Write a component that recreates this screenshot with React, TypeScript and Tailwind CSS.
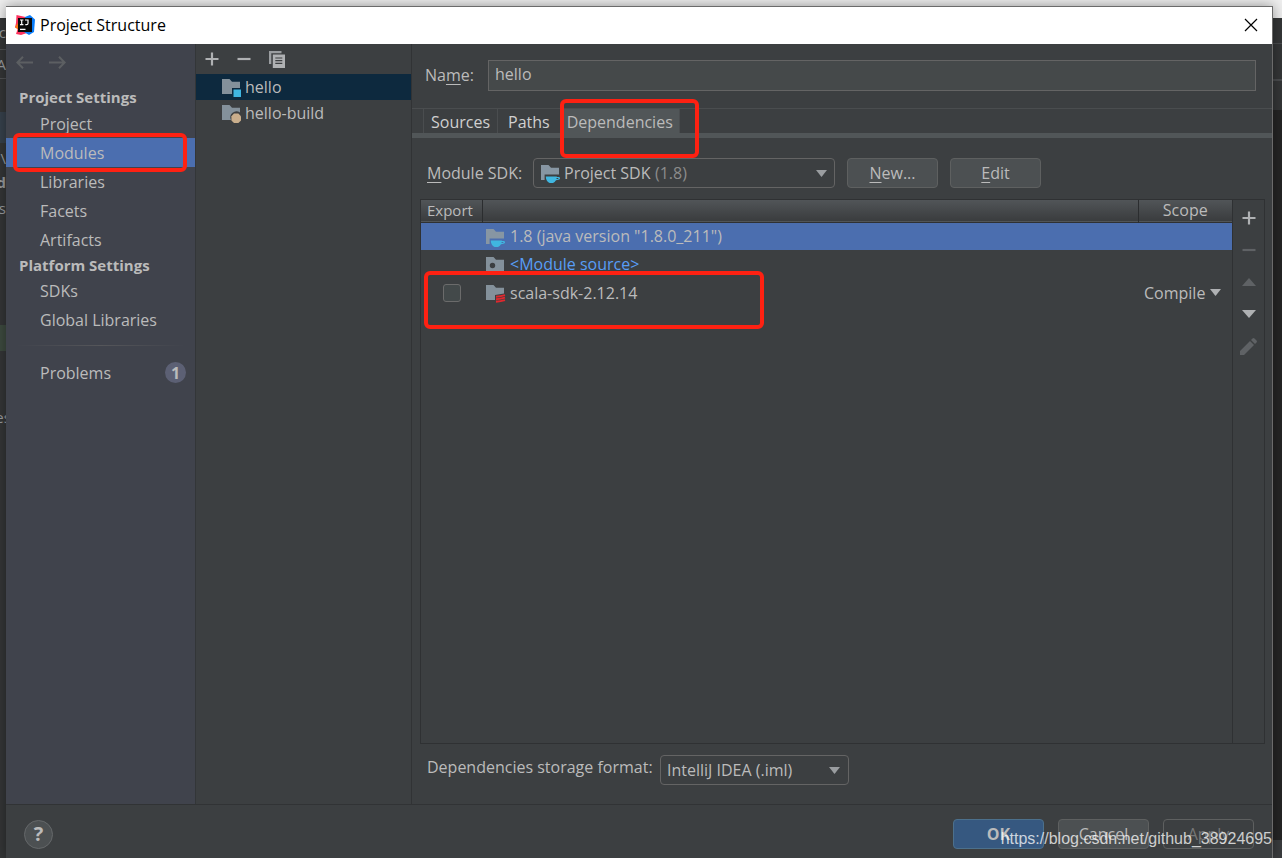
import type { ReactNode } from "react";

type Badge = "module" | "build" | "java" | "source" | "scala";

function FolderIcon({ badge }: { badge: Badge }) {
  return (
    <svg width="20" height="19" viewBox="0 0 20 19" className="shrink-0" aria-hidden="true">
      {badge === "module" && (
        <>
          <path fill="#84919b" d="M0 0h7.5L10 2.8h8V9h-8v6H0z" />
          <path fill="#40b6e0" d="M11.5 10.5H19V18h-7.5z" />
        </>
      )}
      {badge === "build" && (
        <>
          <path fill="#84919b" d="M0 0h7.5L10 2.8h8v4.8a6 6 0 0 0-9 7.4H0z" />
          <path fill="#c9ae8c" d="M12 8.5h4.4L19 11.2v4.2L16.4 18H12l-2.6-2.6v-4.2z" />
        </>
      )}
      {badge === "java" && (
        <>
          <path fill="#8796a3" d="M0 0h7.5L10 2.8h8v6.8H3.6V15H0z" />
          <path
            fill="#40b6e0"
            d="M4.800 11.500h11v.5h1.600c2.200 0 2.200 2.600 0 2.800l-2.400.4c-.8 1.300-1.800 2.200-3 2.700H8.600c-2.400-1-3.800-3.300-3.800-6.400zM15.700 13l-.3 1.100 1.500-.2c.8-.1.8-.9.1-.9z"
          />
        </>
      )}
      {badge === "source" && (
        <>
          <path fill="#84919b" d="M0 0h7.5L10 2.8h8V15H0z" />
          <circle cx="6.500" cy="8.500" r="2.700" fill="#3c3f41" />
        </>
      )}
      {badge === "scala" && (
        <>
          <path fill="#84919b" d="M0 0h7.5L10 2.8h8V8.5L9 10v5H0z" />
          <path
            stroke="#e0282e"
            strokeWidth="1.900"
            fill="none"
            d="M10 11.700q5-.2 9-1.500M10 14.200q5-.2 9-1.500M10 16.700q5-.2 9-1.500"
          />
        </>
      )}
    </svg>
  );
}

function PlusIcon({ color = "#afb1b3" }: { color?: string }) {
  return (
    <svg width="14" height="14" viewBox="0 0 14 14" aria-hidden="true">
      <path d="M5.900 .5h2.200v5.400h5.400v2.200H8.100v5.400H5.900V8.100H.5V5.900h5.400z" fill={color} />
    </svg>
  );
}

function MinusIcon({ color = "#afb1b3" }: { color?: string }) {
  return (
    <svg width="14" height="14" viewBox="0 0 14 14" aria-hidden="true">
      <path d="M.5 5.900h13v2.200H.5z" fill={color} />
    </svg>
  );
}

function CopyIcon() {
  return (
    <svg width="16" height="17" viewBox="0 0 16 17" aria-hidden="true">
      <path d="M0 0h12.500v2.300H2.300V13H0z" fill="#9a9da0" />
      <path d="M3.800 3.500H16V17H3.800z" fill="#afb1b3" />
      <path d="M6.300 7h7M6.300 9.700h7M6.300 12.400h7" stroke="#3c3f41" strokeWidth="1.200" />
    </svg>
  );
}

function Triangle({ up = false, color = "#afb1b3", small = false }: { up?: boolean; color?: string; small?: boolean }) {
  return (
    <svg
      width={small ? 11 : 14}
      height={small ? 7 : 8}
      viewBox="0 0 14 8"
      preserveAspectRatio="none"
      aria-hidden="true"
      className="pointer-events-none"
    >
      <path d={up ? "M0 8h14L7 0z" : "M0 0h14L7 8z"} fill={color} />
    </svg>
  );
}

function PencilIcon() {
  return (
    <svg width="17" height="17" viewBox="0 0 17 17" aria-hidden="true">
      <path d="M0 17v-4L10 3l4 4L4 17zM11 2l1.500-1.500q1-.9 2 0l2 2q.9 1 0 2L15 6z" fill="#5f6265" />
    </svg>
  );
}

function ArrowIcon({ right = false }: { right?: boolean }) {
  return (
    <svg width="17" height="13" viewBox="0 0 17 13" aria-hidden="true">
      <path
        d={right ? "M0 6.500h15.500M10 .8l5.700 5.700L10 12.200" : "M17 6.500H1.500M7 .8L1.300 6.500 7 12.200"}
        stroke="#5c5f62"
        strokeWidth="2"
        fill="none"
      />
    </svg>
  );
}

function AppLogo() {
  return (
    <svg width="20" height="20" viewBox="0 0 20 20" aria-hidden="true">
      <path d="M1.500 0l9 2v9L3 14 0 12.500 1 8z" fill="#fe315d" />
      <path d="M0 12l3-4 3 9z" fill="#f97a12" />
      <path d="M1 19l2-6 9 5-6 2z" fill="#fe315d" />
      <path d="M10 2l5-2 5 4.500-1 12.500-5 3-5-3z" fill="#087cfa" />
      <path d="M3 3h14v14H3z" fill="#0a0a0a" />
      <path
        d="M5 5h3.400M5 9.600h3.400M6.700 5v4.600M10 5h3v3.200q0 1.500-1.400 1.500h-1.300M5 14.300h5.500"
        stroke="#fff"
        strokeWidth="1.200"
        fill="none"
      />
    </svg>
  );
}

function Callout({ className }: { className: string }) {
  return (
    <span
      aria-hidden="true"
      className={`pointer-events-none absolute z-10 rounded-[6px] border-4 border-[#fe2112] ${className}`}
    />
  );
}

function NavItem({ children, active = false }: { children: ReactNode; active?: boolean }) {
  return (
    <li className={active ? "relative bg-[#4b6eaf]" : ""}>
      <a href="#" className="flex h-[29px] items-center pl-[34px]">
        {children}
      </a>
      {active && <Callout className="-top-[5px] right-2 -bottom-[5px] left-[7px]" />}
    </li>
  );
}

function Tab({ children, active = false }: { children: ReactNode; active?: boolean }) {
  return (
    <button
      type="button"
      role="tab"
      aria-selected={active}
      className={
        active
          ? "relative border-r border-[#4a4d4f] bg-[#515658] px-[6px] text-[#bbbbbb]"
          : "border-r border-[#4a4d4f] px-[7px] text-[#d0d0d0] nth-3:px-[10px]"
      }
    >
      {children}
      {active && <Callout className="-top-[10px] -right-[20px] -bottom-[25px] -left-px" />}
    </button>
  );
}

const buttonBase = "flex h-[30px] w-[91px] items-center justify-center rounded-[4px] border";
const selectBase = "h-[30px] w-full appearance-none rounded-[4px] border border-[#646464] bg-[#3c3f41] outline-none";

function EditorBehind() {
  return (
    <div aria-hidden="true" className="absolute inset-0 flex flex-col overflow-hidden text-[15px] text-[#9a9c9e]">
      <div className="h-[18px] shrink-0 bg-[#eeeeee]" />
      <div className="flex grow justify-between">
        <div className="flex w-[6px] flex-col items-end overflow-hidden bg-[#343637] leading-5">
          <span className="mt-1">c</span>
          <span className="mt-[7px] border-y border-[#505254] leading-7">A</span>
          <span className="mt-[33px] h-[31px] w-full bg-[#37414c]" />
          <span className="mt-[5px]">\</span>
          <span className="mt-1 font-bold">d</span>
          <span className="mt-[6px]">s</span>
          <span className="mt-[107px] h-[26px] w-full shrink-0 bg-[#3d4a3f]" />
          <span className="mt-14 self-center">es</span>
        </div>
        <div className="flex w-[10px] flex-col bg-[#252525]">
          <div className="h-[26px] border-b border-[#4a4c4e] bg-[#343637]" />
          <div className="h-[37px] border-b-2 border-[#4a4c4e] bg-[#343637]" />
          <div className="h-[29px] bg-[#343637]" />
          <div className="mt-auto h-[18px] bg-[#3a3c3e]" />
        </div>
      </div>
    </div>
  );
}

export default function App() {
  return (
    <div className="relative flex min-h-screen flex-col bg-[#343637] pt-[6px] pr-[9px] pl-[6px] font-['Open_Sans','Noto_Sans',sans-serif] text-[16px] text-[#bbbbbb]">
      <EditorBehind />
      <main className="relative flex grow flex-col border-t border-r border-[#6b6b6b] bg-[#3c3f41] shadow-[0_0_12px_rgba(0,0,0,0.4)]">
        <header className="flex h-[37px] shrink-0 items-center gap-[5px] bg-white pr-[14px] pb-[2px] pl-[9px] text-black">
          <AppLogo />
          <h1>Project Structure</h1>
          <button type="button" aria-label="Close" className="ml-auto">
            <svg width="14" height="14" viewBox="0 0 14 14" aria-hidden="true">
              <path d="M1 1l12 12M13 1L1 13" stroke="#000" strokeWidth="1.200" />
            </svg>
          </button>
        </header>

        <div className="flex grow border-b border-[#313335]">
          <nav className="flex w-[190px] shrink-0 flex-col border-r border-[#333638] bg-[#40434c]">
            <div className="flex h-9 items-center gap-4 pl-[10px]">
              <button type="button" aria-label="Back">
                <ArrowIcon />
              </button>
              <button type="button" aria-label="Forward">
                <ArrowIcon right />
              </button>
            </div>
            <h2 className="mt-[6px] pl-[13px] text-[15px] leading-[22px] font-bold">Project Settings</h2>
            <ul className="mt-px">
              <NavItem>Project</NavItem>
              <NavItem active>Modules</NavItem>
              <NavItem>Libraries</NavItem>
              <NavItem>Facets</NavItem>
              <NavItem>Artifacts</NavItem>
            </ul>
            <h2 className="pl-[13px] text-[15px] leading-[22px] font-bold">Platform Settings</h2>
            <ul>
              <NavItem>SDKs</NavItem>
              <NavItem>Global Libraries</NavItem>
            </ul>
            <div className="mx-[10px] mt-[11px] h-px bg-linear-to-r from-transparent via-[#55565a] to-transparent" />
            <a href="#" className="mt-3 flex h-[29px] items-center justify-between pr-[9px] pl-[34px]">
              Problems
              <span className="flex size-[21px] items-center justify-center rounded-full bg-[#5c6074] font-bold">1</span>
            </a>
          </nav>

          <section aria-label="Modules" className="flex w-[216px] shrink-0 flex-col border-r border-[#313335]">
            <div className="flex h-[30px] items-center gap-[18px] pl-[9px]">
              <button type="button" aria-label="Add module">
                <PlusIcon />
              </button>
              <button type="button" aria-label="Remove module">
                <MinusIcon />
              </button>
              <button type="button" aria-label="Copy module">
                <CopyIcon />
              </button>
            </div>
            <ul>
              <li className="flex h-[26px] items-center gap-[3px] bg-[#0d293e] pl-[26px]">
                <span className="pt-[3px]">
                  <FolderIcon badge="module" />
                </span>
                hello
              </li>
              <li className="flex h-[26px] items-center gap-[3px] pl-[26px]">
                <span className="pt-[3px]">
                  <FolderIcon badge="build" />
                </span>
                hello-build
              </li>
            </ul>
          </section>

          <section aria-label="Module settings" className="flex min-w-0 grow flex-col">
            <div className="mt-4 flex h-[31px] items-center pr-4 pl-[13px]">
              <label htmlFor="module-name" className="w-[63px] pb-px">
                Na<span className="underline underline-offset-3">m</span>e:
              </label>
              <input
                id="module-name"
                defaultValue="hello"
                className="h-[31px] min-w-0 grow border border-[#646464] bg-[#45494a] px-[6px] pb-[3px] outline-none"
              />
            </div>

            <div
              role="tablist"
              className="mt-[17px] flex h-[30px] border-t border-b-[5px] border-t-[#4a4d4f] border-b-[#515658] leading-[26px]"
            >
              <span className="w-3 border-r border-[#4a4d4f]" />
              <Tab>Sources</Tab>
              <Tab>Paths</Tab>
              <Tab active>Dependencies</Tab>
            </div>

            <div className="mt-5 flex items-center gap-3 pl-[15px]">
              <label htmlFor="module-sdk" className="w-[94px] pb-px whitespace-nowrap">
                <span className="underline underline-offset-3">M</span>odule SDK:
              </label>
              <div className="relative w-[302px]">
                <select id="module-sdk" className={`${selectBase} pl-[30px]`}>
                  <option>Project SDK</option>
                </select>
                <span className="pointer-events-none absolute inset-y-0 left-2 flex items-center pt-[2px]">
                  <FolderIcon badge="java" />
                </span>
                <span className="pointer-events-none absolute inset-y-0 left-[122px] flex items-center text-[#8c8c8c]">
                  (1.8)
                </span>
                <span className="pointer-events-none absolute inset-y-0 right-2 flex items-center">
                  <Triangle small color="#9a9da0" />
                </span>
              </div>
              <button type="button" className={`${buttonBase} border-[#5e6060] bg-[#4c5052]`}>
                <span className="underline underline-offset-3">N</span>ew...
              </button>
              <button type="button" className={`${buttonBase} border-[#5e6060] bg-[#4c5052]`}>
                <span className="underline underline-offset-3">E</span>dit
              </button>
            </div>

            <div className="mt-[11px] mr-[7px] ml-2 flex grow border border-[#2f3133]">
              <div className="min-w-0 grow border-r border-[#2f3133]">
                <table className="w-full table-fixed border-collapse text-left">
                  <colgroup>
                    <col className="w-[61px]" />
                    <col />
                    <col className="w-[94px]" />
                  </colgroup>
                  <thead>
                    <tr className="h-[22px] border-b border-[#2f3133] bg-linear-to-b from-[#515558] to-[#3a3c3e] leading-[21px]">
                      <th scope="col" className="border-r border-[#2b2d2f] pl-[6px] text-[15px] font-normal">
                        Export
                      </th>
                      <th scope="col" aria-label="Dependency" className="border-r border-[#2b2d2f]" />
                      <th scope="col" className="text-center font-normal">
                        Scope
                      </th>
                    </tr>
                  </thead>
                  <tbody>
                    <tr className="h-[28px] bg-[#4b6eaf]">
                      <td />
                      <td className="pl-1">
                        <div className="flex items-center gap-1">
                          <span className="pt-1">
                            <FolderIcon badge="java" />
                          </span>
                          1.8 (java version "1.8.0_211")
                        </div>
                      </td>
                      <td />
                    </tr>
                    <tr className="h-[28px]">
                      <td />
                      <td className="pl-1">
                        <div className="flex items-center gap-1 text-[#589df6]">
                          <span className="pt-1">
                            <FolderIcon badge="source" />
                          </span>
                          &lt;Module source&gt;
                        </div>
                      </td>
                      <td />
                    </tr>
                    <tr className="relative h-[29px]">
                      <td>
                        <input
                          type="checkbox"
                          aria-label="Export scala-sdk-2.12.14"
                          className="ml-[22px] block size-[18px] appearance-none rounded-[3px] border border-[#6b6b6b] bg-[#43494a]"
                        />
                        <Callout className="-top-[7px] left-[3px] h-[58px] w-[340px]" />
                      </td>
                      <td className="pl-1">
                        <div className="flex items-center gap-1">
                          <span className="pt-1">
                            <FolderIcon badge="scala" />
                          </span>
                          scala-sdk-2.12.14
                        </div>
                      </td>
                      <td>
                        <div className="relative pl-[6px]">
                          <select aria-label="Scope" className="w-full appearance-none bg-transparent outline-none">
                            <option>Compile</option>
                          </select>
                          <span className="pointer-events-none absolute inset-y-0 right-[11px] flex items-center">
                            <Triangle small />
                          </span>
                        </div>
                      </td>
                    </tr>
                  </tbody>
                </table>
              </div>
              <div className="flex w-[31px] shrink-0 flex-col items-center pt-[2px]">
                <button type="button" aria-label="Add" className="flex h-8 items-center">
                  <PlusIcon />
                </button>
                <button type="button" aria-label="Remove" className="flex h-8 items-center">
                  <MinusIcon color="#5f6265" />
                </button>
                <button type="button" aria-label="Move up" className="flex h-8 items-center">
                  <Triangle up color="#5f6265" />
                </button>
                <button type="button" aria-label="Move down" className="flex h-8 items-center">
                  <Triangle />
                </button>
                <button type="button" aria-label="Edit" className="flex h-8 items-center">
                  <PencilIcon />
                </button>
              </div>
            </div>

            <div className="flex h-[60px] items-start pt-[11px] pl-[15px]">
              <label htmlFor="storage-format" className="w-[233px] whitespace-nowrap">
                Dependencies storage format:
              </label>
              <div className="relative w-[189px]">
                <select id="storage-format" className={`${selectBase} pl-[6px]`}>
                  <option>IntelliJ IDEA (.iml)</option>
                </select>
                <span className="pointer-events-none absolute inset-y-0 right-[9px] flex items-center">
                  <Triangle small color="#9a9da0" />
                </span>
              </div>
            </div>
          </section>
        </div>

        <footer className="flex h-[53px] shrink-0 items-center gap-[14px] pt-[5px] pr-[18px] pl-[18px]">
          <button
            type="button"
            aria-label="Help"
            className="mr-auto flex size-[29px] items-center justify-center rounded-full border border-[#65686a] bg-[#4c5052] text-[20px] font-bold"
          >
            ?
          </button>
          <button type="button" className={`${buttonBase} border-[#4c708c] bg-[#365880] font-bold`}>
            OK
          </button>
          <button type="button" className={`${buttonBase} border-[#5e6060] bg-[#4c5052]`}>
            Cancel
          </button>
          <button type="button" disabled className={`${buttonBase} border-[#5e6060] text-[#777777]`}>
            Apply
          </button>
        </footer>
      </main>
      <p className="pointer-events-none absolute right-[10px] bottom-[7px] font-['Liberation_Sans',sans-serif] text-[16px] text-white/75">
        https://blog.csdn.net/github_38924695
      </p>
    </div>
  );
}
